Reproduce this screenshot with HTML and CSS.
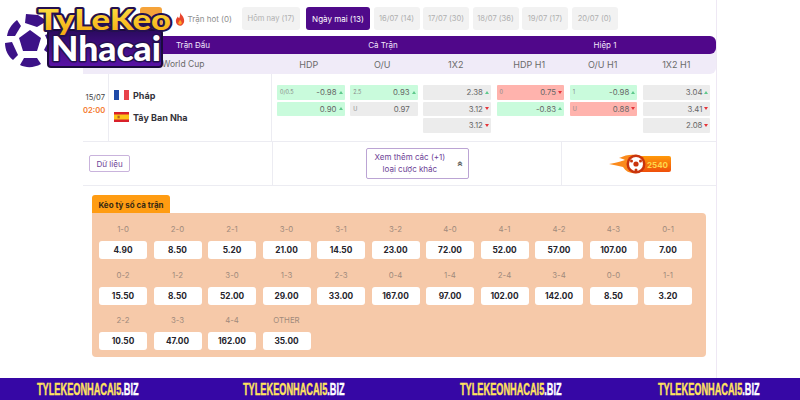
FILE: index.html
```html
<!DOCTYPE html>
<html lang="en">
<head>
    <meta charset="UTF-8">
    <title>Kèo tỷ số</title>
    <link rel="stylesheet" href="styles.css">
</head>
<body>
    <svg class="logo" viewBox="0 0 180 75" width="180" height="75">
        <defs>
            <linearGradient id="logoYellow" x1="0" y1="0" x2="0" y2="1">
                <stop offset="0" stop-color="#ffe94a"/>
                <stop offset="1" stop-color="#f5a80f"/>
            </linearGradient>
            <linearGradient id="logoPlate" x1="0" y1="0" x2="0" y2="1">
                <stop offset="0" stop-color="#2a0a5e"/>
                <stop offset="1" stop-color="#5a12a8"/>
            </linearGradient>
        </defs>
        <circle cx="30" cy="42" r="26" fill="#fff"/>
        <g fill="#3c1287">
            <polygon points="30,30 41,38 37,51 23,51 19,38"/>
            <path d="M26 14 L38 15 L47 21 L37 27 L25 23 Z"/>
            <path d="M17 20 L21 26 L15 36 L7 36 C8 29 12 24 17 20 Z"/>
            <path d="M5 43 L12 42 L18 55 L13 60 C8 56 5 50 5 43 Z"/>
            <path d="M45 35 L54 32 L56 44 L52 56 L44 50 L48 42 Z"/>
            <path d="M24 58 L37 58 L41 64 C34 68 26 68 20 65 Z"/>
        </g>
        <rect x="48" y="30" width="114" height="37" rx="3" fill="url(#logoPlate)" stroke="#1b0a3d" stroke-width="2"/>
        <text class="logo-top" x="38" y="30" textLength="133" lengthAdjust="spacingAndGlyphs">TyLeKeo</text>
        <text class="logo-bottom" x="51" y="61" textLength="110" lengthAdjust="spacingAndGlyphs">Nhacai</text>
    </svg>

    <main class="board">
        <nav class="tabs">
            <span class="tab tab-orange"></span>
            <span class="tab-hot">
                <svg viewBox="0 0 12 16" width="10" height="14"><path d="M6 0 C7 3 11 5 11 10 C11 13.5 8.5 16 6 16 C3 16 1 13.5 1 10.5 C1 8 2.5 6.5 3.5 5 C4 6.5 4.5 7 5 7 C6 5 6.5 3 6 0 Z" fill="#e8452c"/><path d="M6 9 C7 10.5 8.5 11.5 8 13.5 C7.5 15 4.5 15 4 13.5 C3.7 12 5.5 11 6 9 Z" fill="#ffa726"/></svg>
                Trận hot (0)
            </span>
            <span class="tab tab-today">Hôm nay (17)</span>
            <span class="tab tab-active">Ngày mai (13)</span>
            <span class="tab">16/07 (14)</span>
            <span class="tab">17/07 (30)</span>
            <span class="tab">18/07 (36)</span>
            <span class="tab">19/07 (17)</span>
            <span class="tab">20/07 (0)</span>
        </nav>

        <div class="head-bar">
            <div class="head-match">Trận Đấu</div>
            <div class="head-group">Cả Trận</div>
            <div class="head-group">Hiệp 1</div>
        </div>

        <div class="sub-bar">
            <div class="sub-league">World Cup</div>
            <div class="sub-col">HDP</div>
            <div class="sub-col">O/U</div>
            <div class="sub-col">1X2</div>
            <div class="sub-col">HDP H1</div>
            <div class="sub-col">O/U H1</div>
            <div class="sub-col">1X2 H1</div>
        </div>

        <div class="match-row">
            <div class="match-time">
                <div>15/07</div>
                <div class="time-hour">02:00</div>
            </div>
            <div class="match-teams">
                <div class="team">
                    <svg class="flag" viewBox="0 0 15 10"><rect width="5" height="10" fill="#1f4aa8"/><rect x="5" width="5" height="10" fill="#fff"/><rect x="10" width="5" height="10" fill="#e8424a"/></svg>
                    Pháp
                </div>
                <div class="team">
                    <svg class="flag" viewBox="0 0 15 10"><rect width="15" height="10" fill="#d9202a"/><rect y="2.5" width="15" height="5" fill="#fcc419"/><rect x="3.5" y="3.7" width="2.2" height="2.6" fill="#b5651d"/></svg>
                    Tây Ban Nha
                </div>
            </div>
            <div class="odds-col">
                <div class="odd odd-green"><span class="odd-line">0/0.5</span>-0.98<i class="up"></i></div>
                <div class="odd odd-green">0.90<i class="up"></i></div>
            </div>
            <div class="odds-col">
                <div class="odd odd-green"><span class="odd-line">2.5</span>0.93<i class="up"></i></div>
                <div class="odd odd-grey"><span class="odd-line">U</span>0.97<i></i></div>
            </div>
            <div class="odds-col">
                <div class="odd odd-grey">2.38<i class="up"></i></div>
                <div class="odd odd-grey">3.12<i class="down"></i></div>
                <div class="odd odd-grey">3.12<i class="down"></i></div>
            </div>
            <div class="odds-col">
                <div class="odd odd-red"><span class="odd-line">0</span>0.75<i class="down"></i></div>
                <div class="odd odd-green">-0.83<i class="up"></i></div>
            </div>
            <div class="odds-col">
                <div class="odd odd-green"><span class="odd-line">1</span>-0.98<i class="up"></i></div>
                <div class="odd odd-red"><span class="odd-line">U</span>0.88<i class="down"></i></div>
            </div>
            <div class="odds-col">
                <div class="odd odd-grey">3.04<i class="up"></i></div>
                <div class="odd odd-grey">3.41<i class="down"></i></div>
                <div class="odd odd-grey">2.08<i class="down"></i></div>
            </div>
        </div>

        <div class="action-row">
            <div class="action-data"><button class="btn-data">Dữ liệu</button></div>
            <div class="action-more">
                <button class="btn-more">
                    <span>Xem thêm các (+1)<br>loại cược khác</span>
                    <b class="chevrons">«</b>
                </button>
            </div>
            <div class="action-live">
                <svg viewBox="0 0 62 24" width="62" height="24">
                    <defs>
                        <linearGradient id="badgeFill" x1="0" y1="0" x2="0" y2="1">
                            <stop offset="0" stop-color="#ff9a0a"/>
                            <stop offset="1" stop-color="#ef4f0b"/>
                        </linearGradient>
                    </defs>
                    <path d="M0 12 C8 11 12 9 16 8 C14 7 12 6 10 6 C16 3 22 2 28 3 L28 21 C22 22 17 20 14 15 C10 14 5 13 0 12 Z" fill="#fb8a1c"/>
                    <rect x="24" y="4" width="38" height="16" rx="2" fill="url(#badgeFill)"/>
                    <circle cx="27" cy="12" r="9.5" fill="#c9340c"/>
                    <circle cx="27" cy="12" r="7" fill="#fff"/>
                    <circle cx="27" cy="12" r="2.6" fill="#c9340c"/>
                    <circle cx="22.5" cy="9" r="1.5" fill="#c9340c"/>
                    <circle cx="31.5" cy="9" r="1.5" fill="#c9340c"/>
                    <circle cx="27" cy="18" r="1.5" fill="#c9340c"/>
                    <text class="badge-num" x="38" y="15.5">2540</text>
                </svg>
            </div>
        </div>

        <section class="score-box">
            <div class="score-tag">Kèo tỷ số cả trận</div>
            <div class="score-grid">
                <div class="score"><span>1-0</span><b>4.90</b></div>
                <div class="score"><span>2-0</span><b>8.50</b></div>
                <div class="score"><span>2-1</span><b>5.20</b></div>
                <div class="score"><span>3-0</span><b>21.00</b></div>
                <div class="score"><span>3-1</span><b>14.50</b></div>
                <div class="score"><span>3-2</span><b>23.00</b></div>
                <div class="score"><span>4-0</span><b>72.00</b></div>
                <div class="score"><span>4-1</span><b>52.00</b></div>
                <div class="score"><span>4-2</span><b>57.00</b></div>
                <div class="score"><span>4-3</span><b>107.00</b></div>
                <div class="score"><span>0-1</span><b>7.00</b></div>
                <div class="score"><span>0-2</span><b>15.50</b></div>
                <div class="score"><span>1-2</span><b>8.50</b></div>
                <div class="score"><span>3-0</span><b>52.00</b></div>
                <div class="score"><span>1-3</span><b>29.00</b></div>
                <div class="score"><span>2-3</span><b>33.00</b></div>
                <div class="score"><span>0-4</span><b>167.00</b></div>
                <div class="score"><span>1-4</span><b>97.00</b></div>
                <div class="score"><span>2-4</span><b>102.00</b></div>
                <div class="score"><span>3-4</span><b>142.00</b></div>
                <div class="score"><span>0-0</span><b>8.50</b></div>
                <div class="score"><span>1-1</span><b>3.20</b></div>
                <div class="score"><span>2-2</span><b>10.50</b></div>
                <div class="score"><span>3-3</span><b>47.00</b></div>
                <div class="score"><span>4-4</span><b>162.00</b></div>
                <div class="score"><span>OTHER</span><b>35.00</b></div>
            </div>
        </section>
    </main>

    <footer class="site-strip">
        <div class="strip-link"><span>TYLEKEONHACAI5<em>.BIZ</em></span></div>
        <div class="strip-link"><span>TYLEKEONHACAI5<em>.BIZ</em></span></div>
        <div class="strip-link"><span>TYLEKEONHACAI5<em>.BIZ</em></span></div>
        <div class="strip-link"><span>TYLEKEONHACAI5<em>.BIZ</em></span></div>
    </footer>
</body>
</html>
```

FILE: styles.css
```css
* {
    margin: 0;
    padding: 0;
    box-sizing: border-box;
    font-family: 'Inter', 'Noto Sans', sans-serif;
}

body {
    width: 800px;
    height: 400px;
    background: #fff;
    display: flex;
    flex-direction: column;
    position: relative;
    overflow: hidden;
    color: #444;
}

.logo {
    position: absolute;
    top: 0;
    left: 0;
    z-index: 5;
}

.logo-top {
    font-family: 'Lato', sans-serif;
    font-size: 29px;
    font-weight: 900;
    fill: url(#logoYellow);
    stroke: #241050;
    stroke-width: 4px;
    paint-order: stroke;
    stroke-linejoin: round;
}

.logo-bottom {
    font-family: 'Lato', sans-serif;
    font-size: 34px;
    font-weight: 900;
    fill: #fff;
    stroke: #241050;
    stroke-width: 3px;
    paint-order: stroke;
    stroke-linejoin: round;
}

.board {
    flex: 1;
    margin-left: 83px;
    width: 634px;
    border-right: 1px solid #eee8f4;
}

.tabs {
    height: 36px;
    padding: 7px 0 0 57px;
    display: flex;
    align-items: flex-start;
    gap: 3.5px;
}

.tab {
    width: 46px;
    height: 23px;
    background: #f2f2f2;
    border-radius: 3px;
    color: #b0b0b0;
    font-size: 7.6px;
    display: flex;
    align-items: center;
    justify-content: center;
    white-space: nowrap;
}

.tab-orange {
    width: 22px;
    background: #f5a33a;
}

.tab-hot {
    width: 73px;
    height: 23px;
    padding-left: 9px;
    display: flex;
    align-items: center;
    gap: 3px;
    font-size: 8px;
    color: #8e8e8e;
    white-space: nowrap;
}

.tab-today {
    width: 58px;
    margin-right: 2.5px;
}

.tab-active {
    width: 64px;
    background: #4f0a8a;
    color: #fff;
    font-size: 8px;
}

.head-bar {
    position: relative;
    height: 18px;
    background: #50078a;
    border-radius: 0 6px 6px 0;
    color: #f1e6fa;
    font-size: 8px;
    display: flex;
    align-items: center;
    text-align: center;
}

.head-match {
    width: 189px;
    padding-left: 31px;
}

.head-group {
    width: 222px;
}

.sub-bar {
    height: 26px;
    margin-top: -6px;
    padding-top: 6px;
    background: #f0ebf8;
    border-radius: 0 0 6px 0;
    color: #6a6a6a;
    font-size: 9px;
    display: flex;
    align-items: center;
    text-align: center;
}

.sub-league {
    width: 189px;
    padding-left: 79px;
    font-size: 8.5px;
    text-align: left;
}

.sub-col {
    width: 73.5px;
}

.match-row {
    height: 68px;
    border-bottom: 1px solid #ececf2;
    display: flex;
}

.match-time {
    width: 25px;
    padding: 17px 3px 0 0;
    font-size: 7.6px;
    line-height: 13px;
    text-align: right;
    white-space: nowrap;
}

.time-hour {
    color: #f4782c;
    font-weight: 600;
}

.match-teams {
    width: 164px;
    padding: 10px 0 0 5px;
    border-left: 1px solid #ececf2;
    border-right: 1px solid #ececf2;
}

.team {
    height: 22px;
    display: flex;
    align-items: center;
    gap: 4px;
    font-size: 9px;
    font-weight: 700;
    color: #33323a;
}

.flag {
    width: 15px;
    height: 10px;
}

.odds-col {
    width: 73.2px;
    padding: 11px 0.7px 0 5px;
    display: flex;
    flex-direction: column;
    gap: 2px;
}

.odd {
    height: 14.5px;
    padding: 0 1px 0 3px;
    border-radius: 1px;
    display: flex;
    align-items: center;
    justify-content: flex-end;
    font-size: 7.8px;
    color: #666;
}

.odd-green {
    background: #c9fbdc;
}

.odd-red {
    background: #ffb3ad;
}

.odd-grey {
    background: #ececec;
}

.odd-line {
    margin-right: auto;
    font-size: 5.5px;
    color: #888;
}

.odd i {
    width: 5px;
    height: 3px;
    margin-left: 2px;
}

.odd i.up::before {
    content: "";
    display: block;
    width: 0;
    border: 2px solid transparent;
    border-top: 0;
    border-bottom: 3px solid #5fc98c;
}

.odd i.down::before {
    content: "";
    display: block;
    width: 0;
    border: 2px solid transparent;
    border-bottom: 0;
    border-top: 3px solid #e5343a;
}

.action-row {
    height: 44px;
    border-bottom: 1px solid #ececf2;
    display: flex;
}

.action-data {
    width: 189px;
    padding-left: 6px;
    display: flex;
    align-items: center;
}

.btn-data {
    width: 41px;
    height: 17px;
    background: #fff;
    border: 1px solid #c9b3dc;
    border-radius: 2px;
    color: #6d4296;
    font-size: 8px;
}

.action-more {
    width: 290px;
    border-left: 1px solid #ececf2;
    border-right: 1px solid #ececf2;
    display: flex;
    align-items: center;
    justify-content: center;
}

.btn-more {
    width: 103px;
    height: 31px;
    padding: 0 5px 0 8px;
    background: #fff;
    border: 1px solid #bba4d4;
    border-radius: 2px;
    color: #6d4296;
    font-size: 8px;
    line-height: 11.5px;
    display: flex;
    align-items: center;
    justify-content: space-between;
}

.chevrons {
    display: block;
    transform: rotate(90deg);
    font-size: 9px;
    color: #555;
}

.action-live {
    flex: 1;
    display: flex;
    align-items: center;
    justify-content: center;
    padding-left: 1px;
}

.badge-num {
    font-size: 8px;
    font-weight: 700;
    fill: #ffd84a;
}

.score-box {
    margin: 9px 0 0 9px;
    width: 614px;
}

.score-tag {
    width: 78px;
    height: 18px;
    padding-top: 1px;
    background: #ff9c12;
    border-radius: 3px 3px 0 0;
    color: #3a2a12;
    font-size: 8px;
    font-weight: 700;
    display: flex;
    align-items: center;
    justify-content: center;
}

.score-grid {
    height: 144px;
    padding: 9px 7px;
    background: #f6c9a9;
    border-radius: 0 4px 4px 4px;
    display: grid;
    grid-template-columns: repeat(11, 48px);
    grid-auto-rows: 45.5px;
    column-gap: 6.5px;
    align-content: start;
}

.score {
    display: flex;
    flex-direction: column;
    align-items: center;
    gap: 5px;
}

.score span {
    height: 14px;
    line-height: 14px;
    font-size: 7.8px;
    color: #a08a7c;
}

.score b {
    width: 100%;
    height: 18px;
    background: #fff;
    border-radius: 3px;
    color: #26242c;
    font-size: 8.3px;
    font-weight: 700;
    display: flex;
    align-items: center;
    justify-content: center;
}

.site-strip {
    height: 22px;
    padding-left: 37px;
    background: #3607a5;
    display: flex;
}

.strip-link {
    width: 102px;
    height: 22px;
}

.strip-link:nth-child(2) {
    margin-left: 104px;
}

.strip-link:nth-child(3) {
    margin-left: 115px;
}

.strip-link:nth-child(4) {
    margin-left: 96px;
}

/* no condensed face installed, so squeeze the bold one */
.strip-link span {
    display: inline-block;
    font-family: 'Liberation Sans', sans-serif;
    font-size: 12.6px;
    font-weight: 700;
    line-height: 22px;
    color: #ffe35e;
    -webkit-text-stroke: 0.3px #ffe35e;
    white-space: nowrap;
    transform: scale(0.73, 1.35);
    transform-origin: left center;
}

.strip-link em {
    font-family: inherit;
    font-style: normal;
    color: #fff;
    -webkit-text-stroke: 0.3px #fff;
}
```
